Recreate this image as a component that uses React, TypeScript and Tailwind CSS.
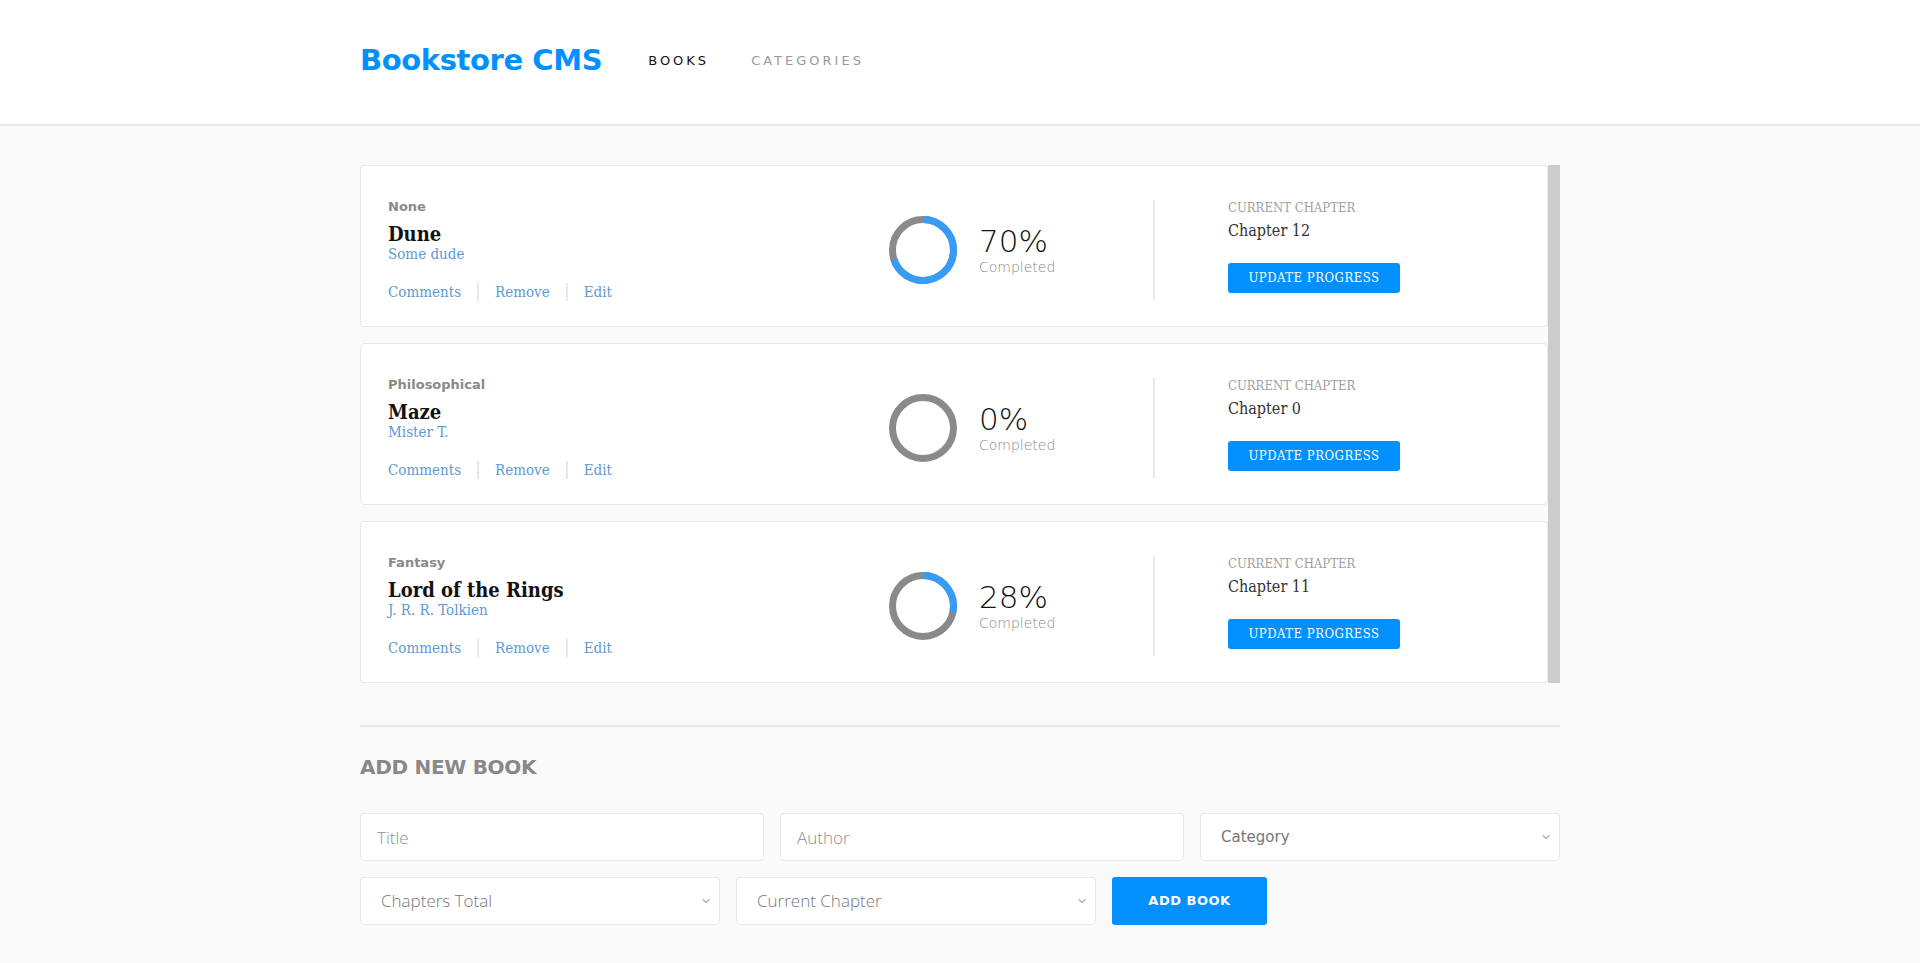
import { ChevronDown } from "lucide-react";

const BOOKS = [
  { category: "None", title: "Dune", author: "Some dude", pct: 70, chapter: "Chapter 12" },
  { category: "Philosophical", title: "Maze", author: "Mister T.", pct: 0, chapter: "Chapter 0" },
  { category: "Fantasy", title: "Lord of the Rings", author: "J. R. R. Tolkien", pct: 28, chapter: "Chapter 11" },
];

const slab = "font-['DejaVu_Serif',serif] [font-stretch:condensed]";

function Ring({ pct }: { pct: number }) {
  const r = 30.5;
  const c = 2 * Math.PI * r;
  return (
    <svg width="68" height="68" viewBox="0 0 68 68" className="shrink-0 -rotate-90">
      <circle cx="34" cy="34" r={r} fill="none" stroke="#8a8a8a" strokeWidth="7" />
      {pct > 0 && (
        <circle
          cx="34"
          cy="34"
          r={r}
          fill="none"
          stroke="#379cf6"
          strokeWidth="7"
          strokeDasharray={`${(c * pct) / 100} ${c}`}
        />
      )}
    </svg>
  );
}

function BookCard({ b }: { b: (typeof BOOKS)[number] }) {
  return (
    <div className="flex items-center rounded-[4px] border border-[#e8e8e8] bg-white pl-[27px]">
      <div className="w-[501px] pt-[33px] pb-[25px]">
        <div className="font-['DejaVu_Sans',sans-serif] text-[13px] leading-[16px] font-bold text-[#8a8a8a]">
          {b.category}
        </div>
        <div className={`mt-[7px] ${slab} text-[20px] leading-[24px] font-bold text-[#121212]`}>
          {b.title}
        </div>
        <div className={`${slab} text-[15px] leading-[16px] text-[#5e9ad0]`}>
          {b.author}
        </div>
        <div className={`mt-[21px] flex items-center ${slab} text-[15px] leading-[18px] text-[#5e9ad0]`}>
          <span className="pr-[16px]">Comments</span>
          <span className="border-l-2 border-[#e8e8e8] px-[16px]">Remove</span>
          <span className="border-l-2 border-[#e8e8e8] pl-[16px]">Edit</span>
        </div>
      </div>
      <div className="flex w-[264px] items-center gap-[22px] pt-[7px]">
        <Ring pct={b.pct} />
        <div>
          <div className="font-['DejaVu_Sans',sans-serif] text-[31px] leading-[36px] font-extralight text-[#121212]">
            {b.pct}%
          </div>
          <div className="-mt-[1px] font-['DejaVu_Sans',sans-serif] text-[14px] leading-[18px] font-extralight text-[#888]">
            Completed
          </div>
        </div>
      </div>
      <div className="mt-[7px] h-[100px] w-[2px] bg-[#e8e8e8]" />
      <div className="pl-[73px]">
        <div className={`${slab} text-[13px] leading-[16px] text-[#a0a0a0]`}>
          CURRENT CHAPTER
        </div>
        <div className={`mt-[5px] ${slab} text-[16px] leading-[20px] text-[#333]`}>
          {b.chapter}
        </div>
        <button className={`mt-[22px] flex h-[30px] w-[172px] items-center justify-center rounded-[3px] bg-[#0290ff] ${slab} text-[13px] tracking-[0.5px] text-white`}>
          UPDATE PROGRESS
        </button>
      </div>
    </div>
  );
}

function Select({ label, font }: { label: string; font: string }) {
  return (
    <div className="relative h-[48px]">
      <select
        className={`h-full w-full appearance-none rounded-[4px] border border-[#e8e8e8] bg-white pl-[20px] text-[#777] outline-none ${font}`}
        defaultValue=""
      >
        <option value="">{label}</option>
      </select>
      <ChevronDown
        className="pointer-events-none absolute top-1/2 right-[8px] -translate-y-1/2 text-[#666]"
        size={12}
        strokeWidth={2}
      />
    </div>
  );
}

export default function App() {
  return (
    <div className="min-h-[963px] bg-[#fafafa]">
      <header className="h-[126px] border-b-2 border-[#e8e8e8] bg-white">
        <div className="mx-auto flex h-full max-w-[1200px] items-center pb-[2px]">
          <h1 className="font-['DejaVu_Sans',sans-serif] text-[29px] font-bold tracking-[-0.4px] text-[#0290ff]">
            Bookstore CMS
          </h1>
          <nav className="ml-[46px] flex gap-[42px] font-['DejaVu_Sans',sans-serif] text-[13px] tracking-[3px]">
            <a className="text-[#121212]">BOOKS</a>
            <a className="text-[#999]">CATEGORIES</a>
          </nav>
        </div>
      </header>

      <main className="mx-auto max-w-[1200px] pt-[39px] pb-[38px]">
        <div className="flex">
          <div className="flex flex-1 flex-col gap-[16px]">
            {BOOKS.map((b) => (
              <BookCard key={b.title} b={b} />
            ))}
          </div>
          <div className="w-[12px] bg-[#cccccc]" />
        </div>

        <div className="mt-[42px] h-[2px] bg-[#e8e8e8]" />

        <h2 className="mt-[28px] font-['DejaVu_Sans',sans-serif] text-[20px] leading-[24px] font-bold tracking-[-0.3px] text-[#888]">
          ADD NEW BOOK
        </h2>

        <form className="mt-[34px] flex flex-col gap-[16px]">
          <div className="grid grid-cols-[404px_404px_1fr] gap-[16px]">
            <input
              placeholder="Title"
              className="h-[48px] rounded-[4px] border border-[#e8e8e8] bg-white pl-[16px] font-['Open_Sans',sans-serif] text-[17px] font-light outline-none placeholder:text-[#8f8f8f]"
            />
            <input
              placeholder="Author"
              className="h-[48px] rounded-[4px] border border-[#e8e8e8] bg-white pl-[16px] font-['Open_Sans',sans-serif] text-[17px] font-light outline-none placeholder:text-[#8f8f8f]"
            />
            <Select label="Category" font="font-['DejaVu_Sans',sans-serif] text-[15px]" />
          </div>
          <div className="grid grid-cols-[360px_360px_155px] gap-[16px]">
            <Select label="Chapters Total" font="font-['Open_Sans',sans-serif] text-[17px] font-light" />
            <Select label="Current Chapter" font="font-['Open_Sans',sans-serif] text-[17px] font-light" />
            <button
              type="button"
              className="h-[48px] rounded-[3px] bg-[#0290ff] font-['DejaVu_Sans',sans-serif] text-[13px] font-bold tracking-[0.5px] text-white"
            >
              ADD BOOK
            </button>
          </div>
        </form>
      </main>
    </div>
  );
}
